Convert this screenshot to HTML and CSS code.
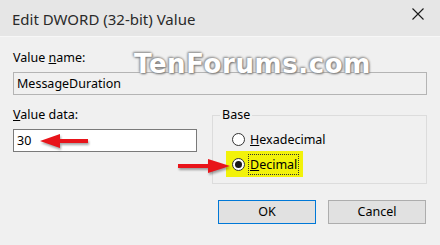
FILE: index.html
```html
<!DOCTYPE html>
<html>
<head>
<meta charset="utf-8">
<link rel="stylesheet" href="styles.css">
</head>
<body>
<div class="dialog">
  <div class="titlebar">
    <span class="title">Edit DWORD (32-bit) Value</span>
    <span class="close"><svg width="12" height="12" viewBox="0 0 12 12"><path d="M0.5 0.5L11.5 11.5M11.5 0.5L0.5 11.5" stroke="#1a1a1a" stroke-width="1.1" fill="none"/></svg></span>
  </div>
  <div class="content">
    <div class="label">Value <u>n</u>ame:</div>
    <div class="field readonly">MessageDuration</div>
    <div class="row">
      <div class="col">
        <div class="label"><u>V</u>alue data:</div>
        <div class="field">30</div>
      </div>
      <fieldset class="base">
        <legend>Base</legend>
        <div class="radio"><span class="circle"></span><span class="rlabel"><u>H</u>exadecimal</span></div>
        <div class="radio selected"><span class="circle on"></span><span class="rlabel focus"><u>D</u>ecimal</span></div>
      </fieldset>
    </div>
    <div class="buttons">
      <div class="btn default">OK</div>
      <div class="btn">Cancel</div>
    </div>
  </div>
  <div class="watermark">TenForums.com</div>
  <svg class="arrow arrow-one" width="56" height="20" viewBox="0 0 56 20"><path d="M2 8 L22 1 L22 6 L50 6 L50 10 L22 10 L22 15 Z" fill="#e8141a"/></svg>
  <svg class="arrow arrow-two" width="60" height="20" viewBox="0 0 60 20"><path d="M54 8 L32 1 L32 6 L2 6 L2 10 L32 10 L32 15 Z" fill="#e8141a"/></svg>
</div>
</body>
</html>
```

FILE: styles.css
```css
html, body {
  margin: 0;
  padding: 0;
}
body {
  width: 440px;
  height: 245px;
  overflow: hidden;
  background: #f0f0f0;
  font-family: "Noto Sans", "Liberation Sans", sans-serif;
  font-size: 12.5px;
  color: #000;
}
.dialog {
  position: relative;
  width: 440px;
  height: 245px;
  background: #f0f0f0;
}
.titlebar {
  height: 37px;
  background: #e6e6e6;
  display: flex;
  align-items: center;
  justify-content: space-between;
  padding: 0 16px 0 12px;
  box-sizing: border-box;
  border-bottom: 1px solid #f7f7f7;
}
.title {
  font-size: 15px;
  color: #2a2a2a;
  margin-top: 2px;
}
.close {
  display: flex;
  margin-top: -9px;
}
.content {
  padding: 13px 13px 0 13px;
}
.label {
  height: 16px;
  line-height: 16px;
}
.field {
  margin-top: 6px;
  height: 23px;
  box-sizing: border-box;
  border: 1px solid #7a7a7a;
  background: #fff;
  line-height: 21px;
  padding-left: 3px;
}
.field.readonly {
  background: #f0f0f0;
  border-color: #b4b4b4;
}
.row {
  display: flex;
  gap: 15px;
  margin-top: 12px;
}
.col {
  width: 184px;
}
.base {
  margin: 0;
  padding: 0 0 6px 0;
  width: 215px;
  box-sizing: border-box;
  border: 1px solid #dcdcdc;
  min-width: 0;
}
.base legend {
  margin-left: 7px;
  padding: 0 2px;
  line-height: 16px;
}
.radio {
  height: 25px;
  margin-left: 13px;
  width: 77px;
  display: flex;
  align-items: center;
  padding-left: 6px;
  box-sizing: border-box;
  white-space: nowrap;
}
.radio:first-of-type {
  margin-top: 4px;
}
.radio.selected {
  background: #f2f20a;
  height: 26px;
  margin-top: -1px;
}
.circle {
  width: 13px;
  height: 13px;
  box-sizing: border-box;
  border: 1px solid #333;
  border-radius: 50%;
  background: #fff;
  margin-right: 4px;
  flex: none;
  display: flex;
  align-items: center;
  justify-content: center;
}
.circle.on::after {
  content: "";
  width: 7px;
  height: 7px;
  border-radius: 50%;
  background: #1a1a1a;
}
.rlabel {
  padding: 1px 1px;
}
.rlabel.focus {
  outline: 1px dotted #333;
  outline-offset: 0;
}
.buttons {
  display: flex;
  justify-content: flex-end;
  gap: 12px;
  margin-top: 16px;
  margin-right: 1px;
}
.btn {
  width: 98px;
  height: 24px;
  box-sizing: border-box;
  border: 1px solid #adadad;
  background: #e1e1e1;
  text-align: center;
  line-height: 22px;
}
.btn.default {
  border: 1px solid #0078d7;
}
.watermark {
  position: absolute;
  left: 134px;
  top: 49px;
  font-family: "DejaVu Sans", sans-serif;
  font-weight: bold;
  font-size: 26px;
  color: #fff;
  letter-spacing: 0.6px;
  text-shadow: 1px 1px 2px #7a7a7a, -1px -1px 2px #9a9a9a, 0 0 3px #888;
}
.arrow {
  position: absolute;
  filter: drop-shadow(1px 2px 1px rgba(0,0,0,0.35));
}
.arrow-one {
  left: 38px;
  top: 133px;
}
.arrow-two {
  left: 176px;
  top: 158px;
}
```
